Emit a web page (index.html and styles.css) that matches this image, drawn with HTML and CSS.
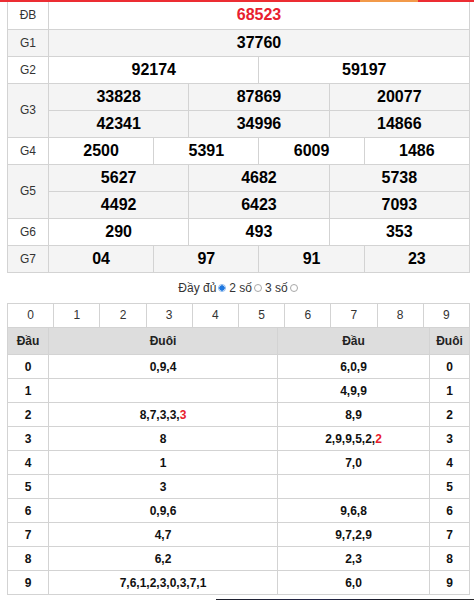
FILE: index.html
```html
<!DOCTYPE html>
<html lang="vi">
<head>
<meta charset="utf-8">
<title>Kết quả xổ số</title>
<link rel="stylesheet" href="styles.css">
</head>
<body>
<div class="topbar"><span class="r1"></span><span class="o"></span><span class="r2"></span></div>
<div class="wrap">
  <table class="kq">
    <colgroup>
      <col class="c-lbl">
      <col><col><col><col><col><col><col><col><col><col><col><col>
    </colgroup>
    <tbody>
      <tr><td class="lbl">ĐB</td><td class="num db" colspan="12">68523</td></tr>
      <tr class="alt"><td class="lbl">G1</td><td class="num" colspan="12">37760</td></tr>
      <tr><td class="lbl">G2</td><td class="num" colspan="6">92174</td><td class="num" colspan="6">59197</td></tr>
      <tr class="alt"><td class="lbl" rowspan="2">G3</td><td class="num" colspan="4">33828</td><td class="num" colspan="4">87869</td><td class="num" colspan="4">20077</td></tr>
      <tr class="alt"><td class="num" colspan="4">42341</td><td class="num" colspan="4">34996</td><td class="num" colspan="4">14866</td></tr>
      <tr><td class="lbl">G4</td><td class="num" colspan="3">2500</td><td class="num" colspan="3">5391</td><td class="num" colspan="3">6009</td><td class="num" colspan="3">1486</td></tr>
      <tr class="alt"><td class="lbl" rowspan="2">G5</td><td class="num" colspan="4">5627</td><td class="num" colspan="4">4682</td><td class="num" colspan="4">5738</td></tr>
      <tr class="alt"><td class="num" colspan="4">4492</td><td class="num" colspan="4">6423</td><td class="num" colspan="4">7093</td></tr>
      <tr><td class="lbl">G6</td><td class="num" colspan="4">290</td><td class="num" colspan="4">493</td><td class="num" colspan="4">353</td></tr>
      <tr class="alt"><td class="lbl">G7</td><td class="num" colspan="3">04</td><td class="num" colspan="3">97</td><td class="num" colspan="3">91</td><td class="num" colspan="3">23</td></tr>
    </tbody>
  </table>

  <div class="opts">
    <span>Đầy đủ</span><span class="radio on"></span>
    <span>2 số</span><span class="radio"></span>
    <span>3 số</span><span class="radio"></span>
  </div>

  <table class="digits">
    <tbody>
      <tr><td>0</td><td>1</td><td>2</td><td>3</td><td>4</td><td>5</td><td>6</td><td>7</td><td>8</td><td>9</td></tr>
    </tbody>
  </table>

  <table class="lt">
    <colgroup>
      <col class="c-dau"><col class="c-duoi"><col class="c-dau2"><col class="c-duoi2">
    </colgroup>
    <thead>
      <tr><th>Đầu</th><th>Đuôi</th><th>Đầu</th><th>Đuôi</th></tr>
    </thead>
    <tbody>
      <tr><td>0</td><td>0,9,4</td><td>6,0,9</td><td>0</td></tr>
      <tr><td>1</td><td></td><td>4,9,9</td><td>1</td></tr>
      <tr><td>2</td><td>8,7,3,3,<span class="red">3</span></td><td>8,9</td><td>2</td></tr>
      <tr><td>3</td><td>8</td><td>2,9,9,5,2,<span class="red">2</span></td><td>3</td></tr>
      <tr><td>4</td><td>1</td><td>7,0</td><td>4</td></tr>
      <tr><td>5</td><td>3</td><td></td><td>5</td></tr>
      <tr><td>6</td><td>0,9,6</td><td>9,6,8</td><td>6</td></tr>
      <tr><td>7</td><td>4,7</td><td>9,7,2,9</td><td>7</td></tr>
      <tr><td>8</td><td>6,2</td><td>2,3</td><td>8</td></tr>
      <tr><td>9</td><td>7,6,1,2,3,0,3,7,1</td><td>6,0</td><td>9</td></tr>
    </tbody>
  </table>
</div>
<div class="banner"></div>
</body>
</html>
```

FILE: styles.css
```css
* { box-sizing: border-box; }

body {
  margin: 0;
  font-family: Arial, "Liberation Sans", sans-serif;
  color: #222;
  background: #fff;
}

.topbar {
  display: flex;
  height: 2px;
}
.topbar .r1 { flex: 0 0 360px; background: #ec2d33; }
.topbar .o { flex: 0 0 58px; background: #f29a4a; }
.topbar .r2 { flex: 1; background: #ec2d33; }

.wrap {
  padding: 0 4px 0 7px;
}

table {
  border-collapse: collapse;
  table-layout: fixed;
  width: 100%;
}

/* results table */
.kq .c-lbl { width: 41px; }
.kq td {
  border: 1px solid #d3d3d3;
  height: 27px;
  padding: 0;
  text-align: center;
  vertical-align: middle;
}
.kq tr:first-child td { border-top: 0; }
.kq .lbl {
  font-size: 12px;
  color: #333;
}
.kq .num {
  font-size: 16px;
  font-weight: bold;
  color: #000;
}
.kq .db {
  color: #e8202e;
}
.kq tr.alt td {
  background: #f4f4f4;
}

/* option row */
.opts {
  height: 30px;
  display: flex;
  align-items: center;
  justify-content: center;
  font-size: 12px;
  color: #333;
  padding-left: 2px;
}
.radio {
  display: inline-block;
  width: 8px;
  height: 8px;
  border: 1px solid #a8a8a8;
  border-radius: 50%;
  margin: 1px 3px 0 2px;
  background: #fff;
}
.radio.on {
  border-color: #8cb8ec;
  background: radial-gradient(circle, #1f78e0 0 2.5px, #fff 3px);
}

/* digits row */
.digits td {
  border: 1px solid #d3d3d3;
  height: 24px;
  padding: 0;
  text-align: center;
  font-size: 12px;
  color: #333;
}

/* loto table */
.lt .c-dau { width: 41px; }
.lt .c-duoi { width: 229px; }
.lt .c-dau2 { width: 152px; }
.lt .c-duoi2 { width: 40px; }
.lt th {
  background: #dddddd;
  border: 1px solid #d3d3d3;
  border-top: 0;
  height: 27px;
  padding: 0;
  font-size: 12px;
  font-weight: bold;
  color: #222;
}
.lt td {
  border: 1px solid #d3d3d3;
  height: 24px;
  padding: 0;
  text-align: center;
  font-size: 12px;
  font-weight: bold;
  color: #111;
}
.lt .red { color: #e8202e; }

.banner {
  margin: 4px 0 0 216px;
  height: 20px;
  background: linear-gradient(90deg, #1d1f2a, #23264a 40%, #191a22 70%, #2c2c30);
}
```
